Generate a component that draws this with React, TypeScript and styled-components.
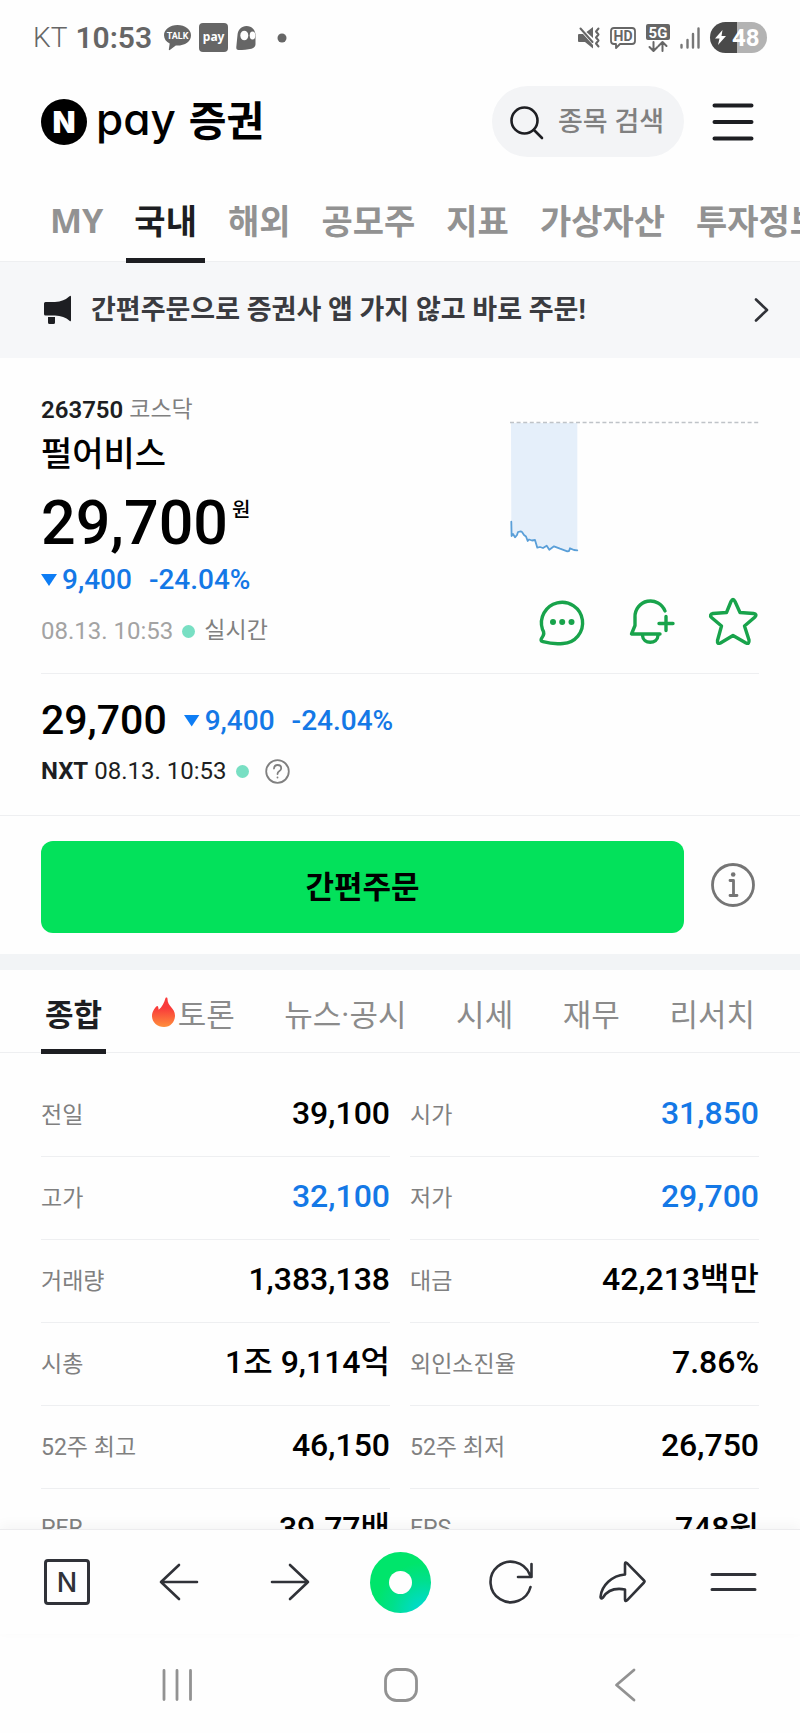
import React from "react";
import styled, { createGlobalStyle, css } from "styled-components";

const ink = "#1d1e22";
const gray = "#8b8b8b";
const blue = "#1478e6";
const line = "#eeeff1";

const GlobalStyle = createGlobalStyle`
  *, *::before, *::after { box-sizing: border-box; }
  html, body { margin: 0; background: #fefefe; }
  body {
    font-family: Roboto, "Noto Sans CJK KR", sans-serif;
    color: ${ink};
  }
  h1, p { margin: 0; }
  button, input { font: inherit; color: inherit; }
  button { border: 0; padding: 0; background: none; cursor: pointer; }
  a { color: inherit; text-decoration: none; }
  svg { display: block; flex: none; overflow: visible; }
`;

const Screen = styled.div`
  display: flex;
  flex-direction: column;
  height: 100vh;
  overflow: hidden;
`;

const Content = styled.main`
  flex: 1;
  min-height: 0;
  overflow: hidden;
`;

/* status bar */
const StatusBar = styled.div`
  display: flex;
  justify-content: space-between;
  align-items: center;
  height: 75px;
  padding: 0 33px;
  color: #666;
`;

const StatusGroup = styled.div<{ $gap: number }>`
  display: flex;
  align-items: center;
  gap: ${(p) => p.$gap}px;
`;

const Carrier = styled.span`
  font-size: 28px;
  font-weight: 300;
`;

const Clock = styled.span`
  font-size: 30px;
  line-height: 32px;
  font-weight: 600;
  margin-right: 4px;
`;

const PayBadge = styled.span`
  display: flex;
  align-items: center;
  justify-content: center;
  width: 29px;
  height: 29px;
  padding-bottom: 3px;
  border-radius: 4px;
  background: #666;
  color: #fff;
  font: 700 12px "Noto Sans", sans-serif;
`;

const Battery = styled.span`
  display: flex;
  align-items: center;
  gap: 6px;
  width: 57px;
  height: 31px;
  padding-left: 5px;
  border-radius: 16px;
  background: linear-gradient(90deg, #4a4a4a 47%, #b3b3b3 47%);
  color: #fff;
  font-size: 24px;
  font-weight: 700;
`;

/* header */
const Header = styled.header`
  display: flex;
  align-items: center;
  gap: 27px;
  height: 93px;
  padding: 0 45px 0 41px;
`;

const Logo = styled.a`
  display: flex;
  align-items: center;
  gap: 9px;
  margin-right: auto;
  color: #000;
  line-height: 48px;
`;

const LogoMark = styled.span`
  display: flex;
  align-items: center;
  justify-content: center;
  width: 46px;
  height: 46px;
  border-radius: 50%;
  background: #000;
  color: #fff;
  font: 900 30px Inter, sans-serif;
`;

const LogoPay = styled.span`
  font: 500 44px/48px Inter, sans-serif;
  font-feature-settings: "cv11", "ss03";
  padding-bottom: 6px;
`;

const LogoName = styled.span`
  font-size: 41px;
  font-weight: 700;
  margin-left: 4px;
`;

const Search = styled.label`
  display: flex;
  align-items: center;
  gap: 14px;
  width: 192px;
  height: 71px;
  padding: 0 16px 0 18px;
  border-radius: 36px;
  background: #f3f4f6;
`;

const SearchInput = styled.input`
  flex: 1;
  min-width: 0;
  padding: 0;
  border: 0;
  outline: 0;
  background: none;
  font-size: 27px;
  font-weight: 500;
  &::placeholder { color: #808080; opacity: 1; }
`;

/* tabs */
const underline = css`
  &::after {
    content: "";
    position: absolute;
    left: 0;
    right: 0;
    bottom: -2px;
    height: 5px;
    background: ${ink};
  }
`;

const MainTabs = styled.nav`
  display: flex;
  gap: 15px;
  height: 94px;
  padding-left: 42px;
  border-bottom: 1px solid ${line};
  overflow-x: clip;
`;

const MainTab = styled.a<{ $active?: boolean }>`
  position: relative;
  display: flex;
  align-items: center;
  flex: none;
  padding: 10px 8px 0;
  font-family: "Noto Sans", "Noto Sans CJK KR", sans-serif;
  font-size: 34px;
  font-weight: 700;
  color: ${(p) => (p.$active ? ink : "#929292")};
  ${(p) => p.$active && underline}
`;

const Banner = styled.a`
  display: flex;
  align-items: center;
  gap: 19px;
  height: 96px;
  padding: 0 30px 0 44px;
  background: #f6f7f9;
  color: #3a3b40;
  font-size: 27px;
  line-height: 36px;
  font-weight: 700;
`;

const BannerText = styled.span`
  flex: 1;
`;

/* quote */
const Quote = styled.section`
  display: flex;
  justify-content: space-between;
  margin: 0 41px;
  padding: 36px 0 26px;
  border-bottom: 1px solid ${line};
`;

const QuoteInfo = styled.div`
  display: flex;
  flex-direction: column;
`;

const Line = styled.p`
  display: flex;
  align-items: center;
  font-size: 24px;
  line-height: 32px;
`;

const Code = styled.strong`
  font-weight: 600;
  margin-right: 6px;
`;

const Small = styled.span`
  font-size: 23px;
  color: #808080;
`;

const StockName = styled.h1`
  margin: 4px 0 9px;
  font-size: 34px;
  line-height: 48px;
  font-weight: 500;
  color: #000;
`;

const Price = styled.p`
  display: flex;
  align-items: flex-start;
  gap: 4px;
  font-size: 61px;
  line-height: 72px;
  font-weight: 500;
  color: #000;
`;

const Won = styled.sup`
  margin-top: 9px;
  font-size: 20px;
  line-height: 28px;
`;

const ChangeRow = styled.p`
  display: flex;
  align-items: center;
  gap: 17px;
  margin-top: 3px;
  color: ${blue};
  font-size: 28px;
  line-height: 36px;
`;

const Amount = styled.span`
  display: flex;
  align-items: center;
  gap: 5px;
  font-weight: 500;
`;

const Percent = styled.span`
  font-weight: 500;
`;

const Triangle = styled.i`
  width: 16px;
  height: 12px;
  background: #0d7df5;
  clip-path: polygon(0 0, 100% 0, 50% 100%);
`;

const LiveLine = styled(Line)`
  gap: 9px;
  margin-top: 17px;
`;

const Stamp = styled.time`
  color: #a3a3a3;
`;

const LiveDot = styled.i`
  width: 13px;
  height: 13px;
  border-radius: 50%;
  background: #78dfc3;
`;

const QuoteSide = styled.div`
  display: flex;
  flex-direction: column;
  justify-content: space-between;
  align-items: flex-end;
  padding-top: 26px;
`;

const Actions = styled.div`
  display: flex;
  gap: 38px;
`;

const Nxt = styled.section`
  padding: 22px 41px 28px;
  border-bottom: 1px solid ${line};
`;

const NxtTop = styled.div`
  display: flex;
  align-items: center;
  gap: 17px;
  ${ChangeRow} { margin-top: 1px; }
`;

const NxtPrice = styled.span`
  font-size: 41px;
  line-height: 48px;
  font-weight: 500;
  color: #000;
`;

const NxtLine = styled(Line)`
  gap: 9px;
  margin-top: 11px;
`;

const Help = styled.button`
  margin-left: 7px;
`;

const Order = styled.section`
  display: flex;
  align-items: center;
  gap: 27px;
  padding: 25px 45px 21px 41px;
`;

const OrderButton = styled.button`
  flex: 1;
  height: 92px;
  padding-bottom: 5px;
  border-radius: 12px;
  background: #03e15b;
  color: #000;
  font-size: 31px;
  font-weight: 700;
`;

const InfoButton = styled.button`
  padding-bottom: 4px;
`;

const SubTabs = styled.nav`
  display: flex;
  justify-content: space-between;
  height: 99px;
  padding: 0 41px;
  border-top: 16px solid #f2f4f6;
  border-bottom: 1px solid ${line};
`;

const SubTab = styled.a<{ $active?: boolean }>`
  position: relative;
  display: flex;
  align-items: center;
  gap: 2px;
  padding: 2px 4px 0;
  font-size: 31px;
  font-weight: ${(p) => (p.$active ? 700 : 400)};
  color: ${(p) => (p.$active ? ink : gray)};
  ${(p) => p.$active && underline}
`;

/* figures */
const Figures = styled.section`
  display: grid;
  grid-template-columns: 1fr 1fr;
  gap: 20px;
  padding: 20px 41px 0;
`;

const FigureTable = styled.table`
  width: 100%;
  border-collapse: collapse;
`;

const FigureRow = styled.tr`
  height: 83px;
  border-bottom: 1px solid ${line};
`;

const FigureLabel = styled.th`
  padding: 0 0 3px;
  text-align: left;
  font-size: 23px;
  font-weight: 400;
  color: #808080;
`;

const FigureValue = styled.td<{ $down?: boolean }>`
  padding: 0 0 3px;
  text-align: right;
  font-size: 32px;
  line-height: 40px;
  font-weight: 500;
  white-space: nowrap;
  color: ${(p) => (p.$down ? blue : "#000")};
`;

/* bottom bars */
const Toolbar = styled.nav`
  position: relative;
  display: flex;
  justify-content: space-between;
  align-items: center;
  height: 105px;
  padding: 0 36px;
  border-top: 1px solid #ececee;
  background: #fefefe;
  box-shadow: 0 -4px 12px rgba(0, 0, 0, 0.04);
`;

const ToolButton = styled.button`
  display: flex;
  align-items: center;
  justify-content: center;
  width: 62px;
  height: 62px;
`;

const HomeBox = styled.span`
  display: flex;
  align-items: center;
  justify-content: center;
  width: 46px;
  height: 46px;
  border: 3px solid #303238;
  border-radius: 4px;
  color: #303238;
  font: 500 27px Inter, sans-serif;
`;

const GreenDot = styled.span`
  width: 61px;
  height: 61px;
  border: 19px solid transparent;
  border-radius: 50%;
  background:
    linear-gradient(#fefefe, #fefefe) padding-box,
    radial-gradient(circle at 90% 100%, #00d9e0 0%, #00e08c 40%, #00e56b 62%) border-box;
`;

const SystemNav = styled.nav`
  display: grid;
  grid-template-columns: repeat(3, 1fr);
  justify-items: center;
  height: 99px;
  padding: 20px 63px 17px 65px;
`;

const stroke = {
  fill: "none",
  strokeLinecap: "round" as const,
  strokeLinejoin: "round" as const,
};

const TalkIcon = () => (
  <svg width="27" height="27" viewBox="0 0 27 27">
    <path fill="#666" d="M13.500 1C6 1 0 5.400 0 11.200c0 3.700 2.300 6.600 5.700 8.400L4.800 25.500c0 .6.500.8 1 .5l6-4.500c9 .4 15.200-3.700 15.200-10.300C27 5.400 21 1 13.500 1z" />
    <text x="13.500" y="14.500" textAnchor="middle" fontSize="9" fontWeight="700" fill="#fff">TALK</text>
  </svg>
);

const GhostIcon = () => (
  <svg width="20" height="24" viewBox="0 0 20 24">
    <path fill="#666" d="M1.500 9C2 3.500 5.500 0 10.500 0 16 0 19.500 4 19.500 9.500V18c0 2.500-1.500 4.200-4 4.700-4 .8-8.500 1.300-13 1.300C1 24 0 23 .3 21z" />
    <ellipse cx="8.300" cy="9.500" rx="4" ry="4.800" fill="#fff" />
    <ellipse cx="16.500" cy="9.500" rx="2.800" ry="4" fill="#fff" />
  </svg>
);

const MuteIcon = () => (
  <svg width="22" height="22" viewBox="0 0 22 22">
    <path fill="#666" d="M0 8q0-1 1-1h4l10 11v3.500L7 15H1q-1 0-1-1zM8.500 5L15 0v11z" />
    <path {...stroke} stroke="#666" strokeWidth="2" d="M2.500 1.500l12 13.500M20.500 1.500l-2.500 3 2.500 3-2.500 3 2.500 3-2.500 3 2.500 3" />
  </svg>
);

const HdIcon = () => (
  <svg width="26" height="22" viewBox="0 0 26 22">
    <path {...stroke} stroke="#666" strokeWidth="1.800" d="M4 1h18q3 0 3 3v10q0 3-3 3H10l-4 4v-4H4q-3 0-3-3V4q0-3 3-3z" />
    <text x="13" y="14" textAnchor="middle" fontSize="14" fontWeight="700" fill="#666">HD</text>
  </svg>
);

const FiveGIcon = () => (
  <svg width="24" height="28" viewBox="0 0 24 28">
    <rect width="24" height="16" rx="2" fill="#666" />
    <text x="12" y="13.500" textAnchor="middle" fontSize="15" fontWeight="700" fill="#fff">5G</text>
    <path {...stroke} stroke="#666" strokeWidth="2" d="M7.500 18v8.500M3.500 23l4 4 4-4M16.500 27v-8.500M12.500 22l4-4 4 4" />
  </svg>
);

const SignalIcon = () => (
  <svg width="20" height="22" viewBox="0 0 20 22">
    <path {...stroke} stroke="#777" strokeWidth="2.400" d="M1.500 18v2.500M7.500 13v7.500M13 7v13.500M18.500 1.500v19" />
  </svg>
);

const BoltIcon = () => (
  <svg width="11" height="15" viewBox="0 0 11 15">
    <path fill="#fff" d="M7.500 0L0 8.500h4.500L3 15l8-9H6.500z" />
  </svg>
);

const SearchIcon = () => (
  <svg width="34" height="34" viewBox="0 0 34 34">
    <g {...stroke} stroke={ink} strokeWidth="2.600">
      <circle cx="14.500" cy="15.500" r="13" />
      <path d="M24 25l8 8" />
    </g>
  </svg>
);

const MenuIcon = () => (
  <svg width="44" height="44" viewBox="0 0 44 44">
    <path {...stroke} stroke={ink} strokeWidth="4" d="M3.500 5.500h37M3.500 22h37M3.500 38.500h37" />
  </svg>
);

const MegaphoneIcon = () => (
  <svg width="28" height="30" viewBox="0 0 28 30">
    <path fill={ink} d="M1.500 7H11q9-.5 14.500-5.700Q27 0 27 2v23q0 2-1.500.7Q20 21 11 20.500H1.500Q0 20.500 0 19V8.500Q0 7 1.500 7zM4 22h7v5.500q0 1.500-1.500 1.500h-4Q4 29 4 27.500z" />
  </svg>
);

const ChevronIcon = () => (
  <svg width="16" height="26" viewBox="0 0 16 26">
    <path {...stroke} stroke="#303238" strokeWidth="2.600" d="M2 2.500L13 13 2 23.500" />
  </svg>
);

const chartLine =
  "1.300,101.700 1.600,116 3,114 5,117.300 7,115 8,112 10.700,111.300 12,112 14,115 16,116.500 17.700,121 19,119.500 22,120.500 25,120 27.300,127.700 30,127 33,128 36.700,125.700 39.300,129.700 44,126.300 50,128.700 57.300,131.300 59,131 60,128.300 64,130 67.300,130.300";

const PriceChart = () => (
  <svg width="248" height="134" viewBox="1 0 248 134" role="img" aria-label="일별 시세 차트">
    <polygon fill="#e5effa" points={`1,3 ${chartLine} 67.300,3`} />
    <path stroke="#bfc3c8" strokeWidth="1.500" strokeDasharray="4 2.600" d="M0 2.500h249" />
    <polyline {...stroke} stroke="#5a9fd8" strokeWidth="1.800" points={chartLine} />
  </svg>
);

const actionStroke = { ...stroke, stroke: "#18a34b", strokeWidth: 3.4 };

const ChatIcon = () => (
  <svg width="48" height="48" viewBox="1 1 48 48">
    <path {...actionStroke} d="M4.500 31.500A20.600 20.600 0 1 1 25 45.500q-10 1-20-1.800-3.200-.8-1.200-3.700 3.500-4.500.7-8.500z" />
    <g fill="#18a34b">
      <circle cx="15" cy="24" r="3" />
      <circle cx="24.200" cy="24" r="3" />
      <circle cx="33.500" cy="24" r="3" />
    </g>
  </svg>
);

const BellIcon = () => (
  <svg width="48" height="48" viewBox="1 1 48 48">
    <path {...actionStroke} d="M41 13A15.500 15.500 0 0 0 11 19v8.500L7.500 36H36M18.500 37.500c.5 9 15 9 15.500 0M42 18.500v14M35 25.500h14" />
  </svg>
);

const StarIcon = () => (
  <svg width="48" height="48" viewBox="1 1 48 48">
    <path {...actionStroke} d="M21 3.500q2-4 4 0L30 14.500l13.500 1q4 .5 1.500 3.500L34.500 28l4.500 14q.5 4.500-3 3L23 37.500 10.500 45q-3.500 1.500-3-2.500L11.500 28 1.500 19.500q-2.500-3 1.500-4l13.500-1z" />
  </svg>
);

const HelpIcon = () => (
  <svg width="25" height="25" viewBox="0 0 25 25">
    <g {...stroke} stroke="#808080" strokeWidth="1.800">
      <circle cx="12.500" cy="12.500" r="11.300" />
      <path d="M9 9.500q.3-3.500 3.600-3.500 3.600 0 3.600 3.200 0 1.700-1.800 2.900-1.900 1.200-1.900 3" />
      <path d="M12.500 18.300v.2" />
    </g>
  </svg>
);

const InfoIcon = () => (
  <svg width="44" height="44" viewBox="0 0 44 44">
    <g {...stroke} stroke="#757575" strokeWidth="2.800">
      <circle cx="22" cy="22" r="20.500" />
      <path d="M19 17.500h3.500V32M19 32.500h7" />
    </g>
    <circle cx="22.200" cy="11.500" r="2.300" fill="#757575" />
  </svg>
);

const FlameIcon = () => (
  <svg width="24" height="30" viewBox="0 0 24 30">
    <defs>
      <linearGradient id="flame" x1="0" y1="0" x2="0" y2="1">
        <stop offset="0.350" stopColor="#f93a3a" />
        <stop offset="1" stopColor="#ff8f3c" />
      </linearGradient>
    </defs>
    <path fill="url(#flame)" d="M13.500 1c1-.8 2-.3 2 1 0 7.500 7.500 9 7.500 16.500C23 25 18.500 30 12 30S0 25.500 0 19c0-4.500 2.500-7.500 4.300-9.600.8-.9 1.700-.6 1.900.6l.5 2.800C10 10 12.500 5.500 13.500 1z" />
  </svg>
);

const toolStroke = { ...stroke, stroke: "#303238", strokeWidth: 2.6 };

const BackIcon = () => (
  <svg width="38" height="38" viewBox="0 0 38 38">
    <path {...toolStroke} d="M38 19H2M20 2L2 19l18 17" />
  </svg>
);

const ForwardIcon = () => (
  <svg width="38" height="38" viewBox="0 0 38 38">
    <path {...toolStroke} d="M2 19h36M20 2l18 17-18 17" />
  </svg>
);

const RefreshIcon = () => (
  <svg width="44" height="44" viewBox="0 0 44 44">
    <path {...toolStroke} d="M41.500 27A20.300 20.300 0 1 1 40.500 14L42 16.500M42.500 4v13H29" />
  </svg>
);

const ShareIcon = () => (
  <svg width="47" height="42" viewBox="0 0 47 42">
    <path {...toolStroke} d="M26 3q0-2.500 2-.8L45 19.500q1 1 0 2L28 39.300q-2 1.700-2-.8V28.500C15 26.500 8 30 4 36.500q-2 2-2.500-.5C2.500 24.500 13 14.500 26 13.500z" />
  </svg>
);

const MoreIcon = () => (
  <svg width="46" height="20" viewBox="0 0 46 20">
    <path {...toolStroke} strokeWidth="3" d="M2 2.500h43M2 17.500h43" />
  </svg>
);

const systemStroke = { ...stroke, stroke: "#929292", strokeWidth: 2.8 };

const RecentsIcon = () => (
  <svg width="32" height="32" viewBox="0 0 32 32">
    <path {...systemStroke} d="M3 1.500v29M16 1.500v29M29.500 1.500v29" />
  </svg>
);

const HomeIcon = () => (
  <svg width="34" height="34" viewBox="0 0 34 34">
    <rect {...systemStroke} x="1.500" y="1.500" width="31" height="31" rx="11" />
  </svg>
);

const SystemBackIcon = () => (
  <svg width="20" height="32" viewBox="0 0 20 32">
    <path {...systemStroke} d="M19 1L1.500 16 19 31" />
  </svg>
);

type Figure = { label: string; value: string; down?: boolean };

const leftFigures: Figure[] = [
  { label: "전일", value: "39,100" },
  { label: "고가", value: "32,100", down: true },
  { label: "거래량", value: "1,383,138" },
  { label: "시총", value: "1조 9,114억" },
  { label: "52주 최고", value: "46,150" },
  { label: "PER", value: "39.77배" },
];

const rightFigures: Figure[] = [
  { label: "시가", value: "31,850", down: true },
  { label: "저가", value: "29,700", down: true },
  { label: "대금", value: "42,213백만" },
  { label: "외인소진율", value: "7.86%" },
  { label: "52주 최저", value: "26,750" },
  { label: "EPS", value: "748원" },
];

const mainTabs = ["MY", "국내", "해외", "공모주", "지표", "가상자산", "투자정보"];
const subTabs = ["종합", "토론", "뉴스·공시", "시세", "재무", "리서치"];

const Change = () => (
  <ChangeRow>
    <Amount>
      <Triangle />
      9,400
    </Amount>
    <Percent>-24.04%</Percent>
  </ChangeRow>
);

const FigureColumn = ({ rows }: { rows: Figure[] }) => (
  <FigureTable>
    <tbody>
      {rows.map((row) => (
        <FigureRow key={row.label}>
          <FigureLabel scope="row">{row.label}</FigureLabel>
          <FigureValue $down={row.down}>{row.value}</FigureValue>
        </FigureRow>
      ))}
    </tbody>
  </FigureTable>
);

export default function App() {
  return (
    <Screen>
      <GlobalStyle />
      <StatusBar>
        <StatusGroup $gap={8}>
          <Carrier>KT</Carrier>
          <Clock>10:53</Clock>
          <TalkIcon />
          <PayBadge>pay</PayBadge>
          <GhostIcon />
          <svg width="44" height="10" viewBox="0 0 44 10">
            <circle cx="18" cy="5" r="4.500" fill="#666" />
          </svg>
        </StatusGroup>
        <StatusGroup $gap={10}>
          <MuteIcon />
          <HdIcon />
          <FiveGIcon />
          <SignalIcon />
          <Battery>
            <BoltIcon />
            48
          </Battery>
        </StatusGroup>
      </StatusBar>

      <Content>
        <Header>
          <Logo href="#">
            <LogoMark>N</LogoMark>
            <LogoPay>pay</LogoPay>
            <LogoName>증권</LogoName>
          </Logo>
          <Search>
            <SearchIcon />
            <SearchInput type="text" placeholder="종목 검색" aria-label="종목 검색" />
          </Search>
          <button type="button" aria-label="메뉴">
            <MenuIcon />
          </button>
        </Header>

        <MainTabs>
          {mainTabs.map((tab) => (
            <MainTab key={tab} href="#" $active={tab === "국내"}>
              {tab}
            </MainTab>
          ))}
        </MainTabs>

        <Banner href="#">
          <MegaphoneIcon />
          <BannerText>간편주문으로 증권사 앱 가지 않고 바로 주문!</BannerText>
          <ChevronIcon />
        </Banner>

        <Quote>
          <QuoteInfo>
            <Line>
              <Code>263750</Code>
              <Small>코스닥</Small>
            </Line>
            <StockName>펄어비스</StockName>
            <Price>
              29,700
              <Won>원</Won>
            </Price>
            <Change />
            <LiveLine>
              <Stamp>08.13. 10:53</Stamp>
              <LiveDot />
              <Small>실시간</Small>
            </LiveLine>
          </QuoteInfo>
          <QuoteSide>
            <PriceChart />
            <Actions>
              <button type="button" aria-label="토론">
                <ChatIcon />
              </button>
              <button type="button" aria-label="알림 추가">
                <BellIcon />
              </button>
              <button type="button" aria-label="관심 종목">
                <StarIcon />
              </button>
            </Actions>
          </QuoteSide>
        </Quote>

        <Nxt>
          <NxtTop>
            <NxtPrice>29,700</NxtPrice>
            <Change />
          </NxtTop>
          <NxtLine>
            <span>
              <b>NXT</b> <time>08.13. 10:53</time>
            </span>
            <LiveDot />
            <Help type="button" aria-label="도움말">
              <HelpIcon />
            </Help>
          </NxtLine>
        </Nxt>

        <Order>
          <OrderButton type="button">간편주문</OrderButton>
          <InfoButton type="button" aria-label="간편주문 안내">
            <InfoIcon />
          </InfoButton>
        </Order>

        <SubTabs>
          {subTabs.map((tab) => (
            <SubTab key={tab} href="#" $active={tab === "종합"}>
              {tab === "토론" && <FlameIcon />}
              {tab}
            </SubTab>
          ))}
        </SubTabs>

        <Figures>
          <FigureColumn rows={leftFigures} />
          <FigureColumn rows={rightFigures} />
        </Figures>
      </Content>

      <Toolbar>
        <ToolButton type="button" aria-label="네이버 홈">
          <HomeBox>N</HomeBox>
        </ToolButton>
        <ToolButton type="button" aria-label="뒤로">
          <BackIcon />
        </ToolButton>
        <ToolButton type="button" aria-label="앞으로">
          <ForwardIcon />
        </ToolButton>
        <ToolButton type="button" aria-label="그린닷">
          <GreenDot />
        </ToolButton>
        <ToolButton type="button" aria-label="새로고침">
          <RefreshIcon />
        </ToolButton>
        <ToolButton type="button" aria-label="공유">
          <ShareIcon />
        </ToolButton>
        <ToolButton type="button" aria-label="더보기">
          <MoreIcon />
        </ToolButton>
      </Toolbar>

      <SystemNav>
        <ToolButton type="button" aria-label="최근 앱">
          <RecentsIcon />
        </ToolButton>
        <ToolButton type="button" aria-label="홈">
          <HomeIcon />
        </ToolButton>
        <ToolButton type="button" aria-label="이전">
          <SystemBackIcon />
        </ToolButton>
      </SystemNav>
    </Screen>
  );
}
